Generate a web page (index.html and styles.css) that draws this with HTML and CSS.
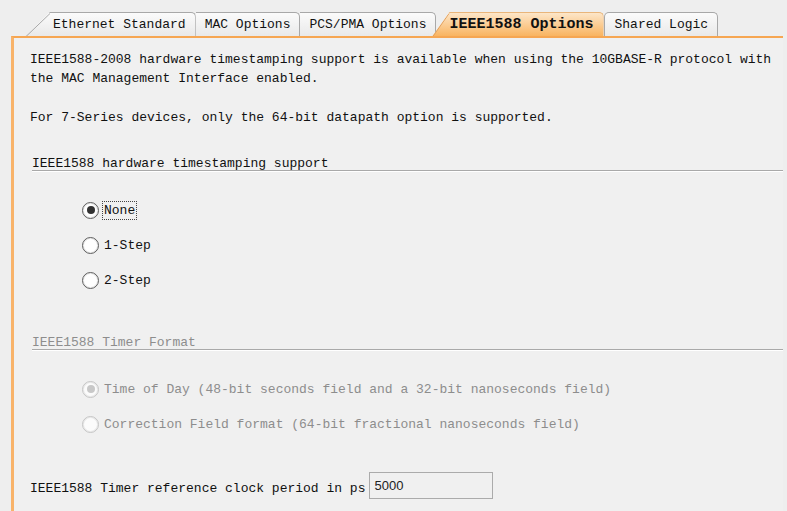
FILE: index.html
```html
<!DOCTYPE html>
<html>
<head>
<meta charset="utf-8">
<link rel="stylesheet" href="styles.css">
</head>
<body>
<div class="tabbar">
  <div class="tab tab-first">
    <svg class="slant" width="26" height="24" viewBox="0 0 26 24"><line x1="0.5" y1="24" x2="25" y2="0.5" stroke="#a8a8a8" stroke-width="1"/></svg>
    Ethernet Standard
  </div>
  <div class="tab">MAC Options</div>
  <div class="tab">PCS/PMA Options</div>
  <div class="tab tab-active">
    <svg class="slant" width="18" height="24" viewBox="0 0 18 24"><line x1="0.5" y1="24" x2="17" y2="0.5" stroke="#e0a060" stroke-width="1"/></svg>
    IEEE1588 Options
  </div>
  <div class="tab">Shared Logic</div>
</div>
<div class="panel">
  <p class="intro">IEEE1588-2008 hardware timestamping support is available when using the 10GBASE-R protocol with<br>the MAC Management Interface enabled.</p>
  <p class="note">For 7-Series devices, only the 64-bit datapath option is supported.</p>

  <div class="section-title sec1">IEEE1588 hardware timestamping support</div>
  <div class="radios radios1">
    <label class="radio"><span class="dot checked"></span><span class="focus">None</span></label>
    <label class="radio"><span class="dot"></span><span>1-Step</span></label>
    <label class="radio"><span class="dot"></span><span>2-Step</span></label>
  </div>

  <div class="section-title sec2 disabled">IEEE1588 Timer Format</div>
  <div class="radios radios2 disabled">
    <label class="radio"><span class="dot checked"></span><span>Time of Day (48-bit seconds field and a 32-bit nanoseconds field)</span></label>
    <label class="radio"><span class="dot"></span><span>Correction Field format (64-bit fractional nanoseconds field)</span></label>
  </div>

  <div class="field-row">
    <span class="field-label">IEEE1588 Timer reference clock period in ps</span>
    <span class="field-input">5000</span>
  </div>
</div>
</body>
</html>
```

FILE: styles.css
```css
html, body {
  margin: 0;
  padding: 0;
}
body {
  background: #eeeeee;
  font-family: "Liberation Mono", "DejaVu Sans Mono", monospace;
  font-size: 13px;
  color: #111;
  width: 787px;
  height: 511px;
  overflow: hidden;
}
.tabbar {
  display: flex;
  align-items: flex-end;
  height: 24px;
  margin-top: 12px;
  padding-left: 25px;
}
.tab {
  position: relative;
  height: 23px;
  line-height: 23px;
  padding: 0 9px 0 9px;
  border: 1px solid #a8a8a8;
  border-bottom: none;
  border-left: none;
  border-radius: 0 5px 0 0;
  background: linear-gradient(#fbfbfb, #e9e9e9);
  white-space: nowrap;
}
.tab-first {
  padding-left: 28px;
  padding-right: 9px;
  clip-path: polygon(0 100%, 25px 0, 100% 0, 100% 100%);
}
.slant {
  position: absolute;
  left: 0;
  top: 0;
}
.tab-active {
  margin-left: -4px;
  z-index: 1;
  padding-left: 17px;
  padding-right: 9px;
  font-weight: bold;
  font-size: 15px;
  border-color: #e9b57a;
  background: linear-gradient(#fde6c8, #f9b461);
  clip-path: polygon(0 100%, 17px 0, 100% 0, 100% 100%);
}
.tab-active + .tab {
  border-left: 1px solid #a8a8a8;
  border-radius: 5px 5px 0 0;
  padding-left: 10px;
}
.panel {
  width: 772px;
  margin-left: 11px;
  height: 475px;
  border-top: 2px solid #f6a652;
  border-left: 3px solid #f8b36a;
  background: #f0f0f0;
  padding-left: 16px;
  box-sizing: border-box;
}
p {
  margin: 0;
  line-height: 19px;
}
.intro {
  padding-top: 12px;
}
.note {
  margin-top: 20px;
}
.section-title {
  margin-left: 2px;
  height: 12px;
  line-height: 12px;
  border-bottom: 1px solid #a9a9a9;
  box-shadow: 0 1px 0 #ffffff;
}
.sec1 { margin-top: 31px; }
.sec2 { margin-top: 47px; }
.disabled { color: #8d8d8d; }
.radios {
  display: flex;
  flex-direction: column;
  gap: 15px;
  padding-left: 52px;
}
.radios1 { margin-top: 29px; }
.radios2 { margin-top: 29px; }
.radio {
  display: flex;
  align-items: center;
  gap: 5px;
  height: 20px;
}
.dot {
  position: relative;
  width: 15px;
  height: 15px;
  border-radius: 50%;
  border: 1px solid #5c5c5c;
  background: #ffffff;
  box-shadow: inset 0 0 0 1px #e8e8e8;
  flex: none;
}
.dot.checked::after {
  content: "";
  position: absolute;
  left: 3.5px;
  top: 3.5px;
  width: 8px;
  height: 8px;
  border-radius: 50%;
  background: #333333;
}
.disabled .dot {
  border-color: #c4c4c4;
  background: #fbfbfb;
}
.disabled .dot.checked::after {
  background: #c8c8c8;
}
.focus {
  outline: 1px dotted #444;
  outline-offset: 1px;
}
.field-row {
  display: flex;
  align-items: center;
  margin-top: 38px;
  height: 27px;
}
.field-label {
  margin-right: 4px;
  margin-top: 6px;
}
.field-input {
  width: 124px;
  height: 27px;
  box-sizing: border-box;
  border: 1px solid #ababab;
  background: #f0f0f0;
  font-family: "Liberation Sans", Arial, sans-serif;
  font-size: 13px;
  line-height: 25px;
  padding-left: 4px;
  color: #222;
}
```
